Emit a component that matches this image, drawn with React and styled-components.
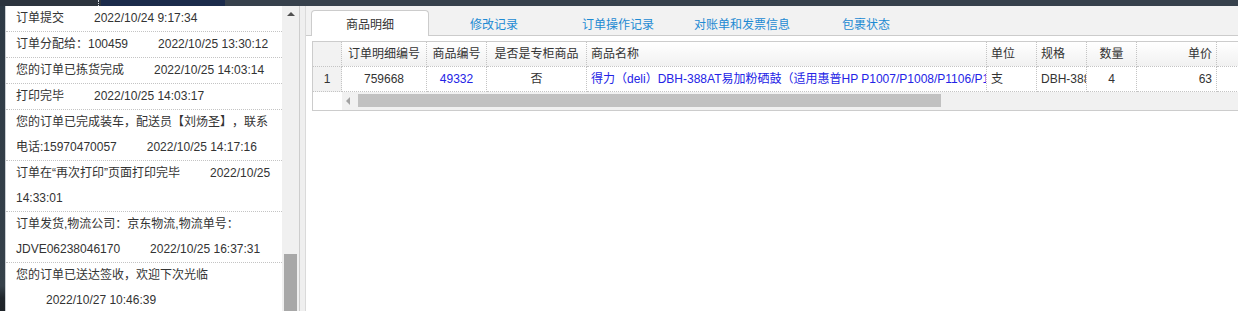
import React from 'react';
import styled, { createGlobalStyle } from 'styled-components';

const GlobalStyle = createGlobalStyle`
  html, body { margin: 0; padding: 0; width: 1238px; height: 311px; overflow: hidden; background: #fff; }
  body {
    font-family: "Liberation Sans", "Noto Sans CJK SC", sans-serif;
    font-size: 12px;
    color: #333;
    text-spacing-trim: space-all;
  }
`;

const Page = styled.div`
  display: flex;
  flex-direction: column;
  width: 1238px;
  height: 311px;
  overflow: hidden;
`;

const TopBar = styled.div`
  display: flex;
  height: 6px;
  flex: none;
`;

const TopSeg = styled.div`
  flex: ${(p) => (p.$w ? `0 0 ${p.$w}px` : '1 1 auto')};
  background: ${(p) => p.$bg};
`;

const Grip = styled.div`
  flex: 0 0 2px;
  background: #2c343e;
  border-left: 1px dotted #d8dde3;
`;

const Main = styled.div`
  display: flex;
  flex: 1;
  min-height: 0;
`;

const LeftEdge = styled.div`
  flex: 0 0 5px;
  background: linear-gradient(to bottom, #2e3a45 0, #36414a 280px, #20262c 292px, #1e2328 100%);
`;

const List = styled.div`
  flex: 0 0 277px;
  box-sizing: border-box;
  border-left: 1px solid #c9cdd1;
  background: #fff;
  overflow: hidden;
`;

const Item = styled.div`
  padding: 0 6px 0 10px;
  line-height: 25px;
  border-bottom: 1px dotted #c4c4c4;
  color: #333;
  text-spacing-trim: space-all;
`;

const Time = styled.span`
  padding-left: 30px;
`;

const VScroll = styled.div`
  flex: 0 0 17px;
  display: flex;
  flex-direction: column;
  background: #f0f0f0;
`;

const ArrowBox = styled.div`
  flex: 0 0 ${(p) => p.$size}px;
  display: flex;
  align-items: center;
  justify-content: center;
`;

const UpArrow = styled.div`
  width: 0;
  height: 0;
  border-left: 4px solid transparent;
  border-right: 4px solid transparent;
  border-bottom: 4px solid #505050;
  margin-top: -2px;
`;

const VThumb = styled.div`
  margin: ${(p) => p.$offset}px 2px 0 2px;
  flex: 1;
  background: #a8a8a8;
`;

const Gutter = styled.div`
  flex: 0 0 6px;
  box-sizing: border-box;
  border-left: 1px solid #cdcdcd;
  background: #efefef;
`;

const Right = styled.div`
  flex: 1;
  min-width: 0;
  display: flex;
  flex-direction: column;
  border-left: 1px solid #dadada;
  background: #fff;
  overflow: hidden;
`;

const TabBar = styled.div`
  flex: none;
  display: flex;
  align-items: flex-end;
  gap: 6px;
  height: 30px;
  box-sizing: border-box;
  padding: 0 0 0 5px;
  background: #f2f2f2;
  border-bottom: 1px solid #cccccc;
`;

const Tab = styled.div`
  flex: 0 0 118px;
  box-sizing: border-box;
  height: 26px;
  margin-bottom: -1px;
  display: flex;
  align-items: center;
  justify-content: center;
  border: 1px solid ${(p) => (p.$active ? '#cccccc' : 'transparent')};
  border-bottom: none;
  border-radius: 4px 4px 0 0;
  background: ${(p) => (p.$active ? '#fff' : 'transparent')};
  color: ${(p) => (p.$active ? '#333' : '#1d8ad3')};
  padding-bottom: 1px;
`;

const Content = styled.div`
  padding: 5px 0 0 6px;
`;

const COLS = '29px 85px 60px 100px 400px 50px 50px 50px 80px 120px 120px';

const Grid = styled.div`
  display: grid;
  grid-template-columns: ${COLS};
  width: max-content;
  border: 1px solid #cccccc;
  border-right: none;
`;

const Cell = styled.div`
  box-sizing: border-box;
  height: 25px;
  line-height: 24px;
  padding: 0 4px;
  border-right: 1px dotted #c4c4c4;
  border-bottom: 1px dotted #c4c4c4;
  white-space: nowrap;
  overflow: hidden;
  text-align: ${(p) => p.$align || 'left'};
  color: ${(p) => (p.$link ? '#2323e6' : '#333')};
  background: ${(p) =>
    p.$num ? '#f2f2f2' : p.$head ? 'linear-gradient(to bottom, #ffffff, #f1f1f1)' : '#fff'};
`;

const ScrollLead = styled.div`
  height: 18px;
  background: #fff;
`;

const HScroll = styled.div`
  grid-column: 2 / -1;
  height: 18px;
  display: flex;
  background: #f1f1f1;
`;

const LeftArrow = styled.div`
  width: 0;
  height: 0;
  border-top: 4px solid transparent;
  border-bottom: 4px solid transparent;
  border-right: 4px solid #a3a3a3;
  margin-left: -4px;
`;

const HThumb = styled.div`
  flex: 0 0 ${(p) => p.$w}px;
  margin: 2px 0 3px 0;
  background: #c1c1c1;
`;

const events = [
  { msg: '订单提交', date: '2022/10/24', time: '9:17:34' },
  { msg: '订单分配给：100459', date: '2022/10/25', time: '13:30:12' },
  { msg: '您的订单已拣货完成', date: '2022/10/25', time: '14:03:14' },
  { msg: '打印完毕', date: '2022/10/25', time: '14:03:17' },
  { msg: '您的订单已完成装车，配送员【刘炀圣】，联系电话:15970470057', date: '2022/10/25', time: '14:17:16' },
  { msg: '订单在“再次打印”页面打印完毕', date: '2022/10/25', time: '14:33:01' },
  { msg: '订单发货,物流公司：京东物流,物流单号：JDVE06238046170', date: '2022/10/25', time: '16:37:31' },
  { msg: '您的订单已送达签收，欢迎下次光临', date: '2022/10/27', time: '10:46:39' },
];

const tabs = ['商品明细', '修改记录', '订单操作记录', '对账单和发票信息', '包裹状态'];

const headers = [
  { t: '', num: true, align: 'center' },
  { t: '订单明细编号', align: 'center' },
  { t: '商品编号', align: 'center' },
  { t: '是否是专柜商品', align: 'center' },
  { t: '商品名称' },
  { t: '单位' },
  { t: '规格' },
  { t: '数量', align: 'center' },
  { t: '单价', align: 'right' },
  { t: '金额', align: 'right' },
  { t: '备注' },
];

const row = [
  { t: '1', num: true, align: 'center' },
  { t: '759668', align: 'center' },
  { t: '49332', align: 'center', link: true },
  { t: '否', align: 'center' },
  {
    t: '得力（deli）DBH-388AT易加粉硒鼓（适用惠普HP P1007/P1008/P1106/P1108/M1136/M1213nf/M1216nfh）',
    link: true,
  },
  { t: '支' },
  { t: 'DBH-388AT' },
  { t: '4', align: 'center' },
  { t: '63', align: 'right' },
  { t: '252', align: 'right' },
  { t: '' },
];

export default function App() {
  return (
    <Page>
      <GlobalStyle />
      <TopBar>
        <TopSeg $w={98} $bg="#2c343e" />
        <Grip />
        <TopSeg $w={124} $bg="#1b2b4b" />
        <TopSeg $bg="#37414c" />
      </TopBar>
      <Main>
        <LeftEdge />
        <List>
          {events.map((e, i) => (
            <Item key={i}>
              {e.msg}
              <Time>
                {e.date} {e.time}
              </Time>
            </Item>
          ))}
        </List>
        <VScroll>
          <ArrowBox $size={17}>
            <UpArrow />
          </ArrowBox>
          <VThumb $offset={231} />
        </VScroll>
        <Gutter />
        <Right>
          <TabBar>
            {tabs.map((t, i) => (
              <Tab key={t} $active={i === 0}>
                {t}
              </Tab>
            ))}
          </TabBar>
          <Content>
            <Grid>
              {headers.map((h, i) => (
                <Cell key={'h' + i} $head $num={h.num} $align={h.align}>
                  {h.t}
                </Cell>
              ))}
              {row.map((c, i) => (
                <Cell key={'r' + i} $num={c.num} $align={c.align} $link={c.link}>
                  {c.t}
                </Cell>
              ))}
              <ScrollLead />
              <HScroll>
                <ArrowBox $size={16}>
                  <LeftArrow />
                </ArrowBox>
                <HThumb $w={583} />
              </HScroll>
            </Grid>
          </Content>
        </Right>
      </Main>
    </Page>
  );
}
